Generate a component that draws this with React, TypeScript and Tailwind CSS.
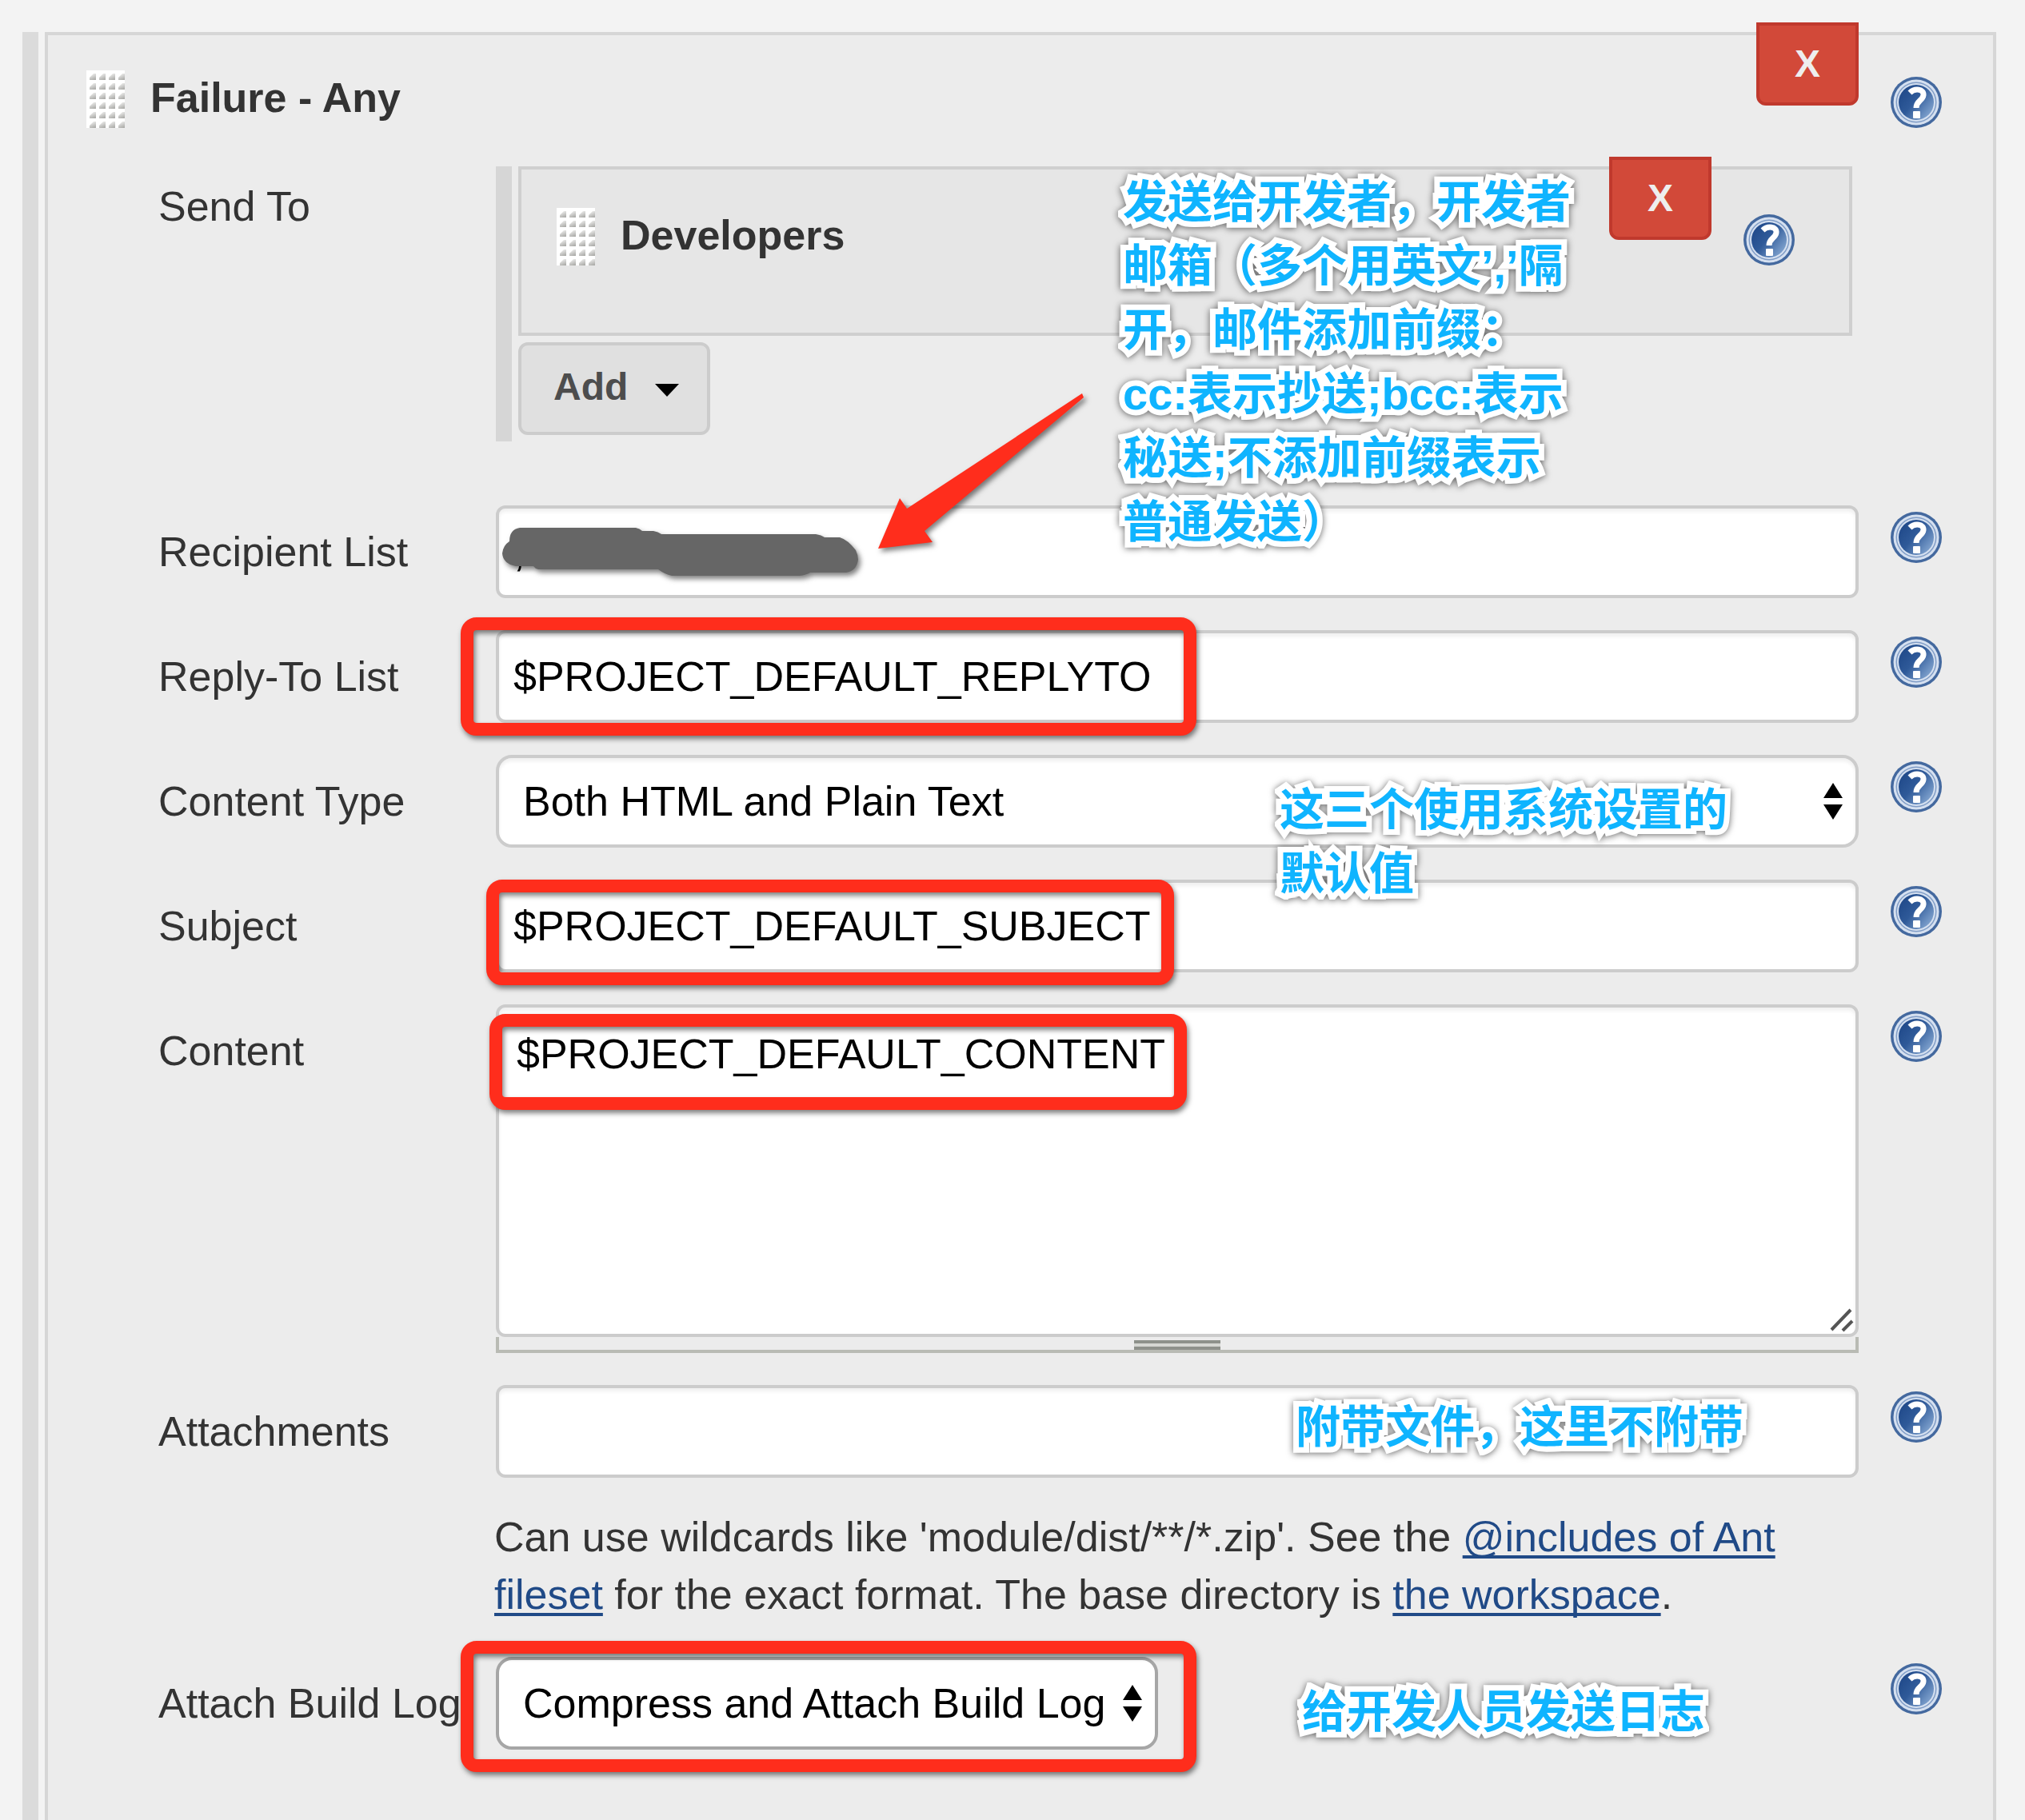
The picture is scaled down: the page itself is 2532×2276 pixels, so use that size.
import type { ReactNode } from "react";

function HelpIcon({ label }: { label: string }) {
  return (
    <button type="button" aria-label={label} className="block size-16 shrink-0 cursor-pointer">
      <svg viewBox="0 0 64 64" className="size-16" aria-hidden="true">
        <defs>
          <linearGradient id="helpFill" x1="0" y1="0.1" x2="1" y2="0.9">
            <stop offset="0" stopColor="#1d4687" />
            <stop offset="0.45" stopColor="#2f5a99" />
            <stop offset="1" stopColor="#8fb0d8" />
          </linearGradient>
        </defs>
        <circle cx="32" cy="32" r="32" fill="#44699f" />
        <circle cx="32" cy="32" r="28.5" fill="#d5e0f0" />
        <circle cx="32" cy="32" r="25.5" fill="#7f9cc6" />
        <circle cx="32" cy="32" r="24" fill="#d5e0f0" />
        <circle cx="32" cy="32" r="22" fill="url(#helpFill)" />
        <path d="M24 20 C30 14 42 15 41 23 C40 30 32 30 32 39" fill="none" stroke="#fff" strokeWidth="7" />
        <rect x="28" y="43" width="9" height="9" rx="1" fill="#fff" />
      </svg>
    </button>
  );
}

function Grip() {
  return (
    <svg viewBox="0 0 48 72" className="h-18 w-12 shrink-0 cursor-move" aria-hidden="true">
      <defs>
        <linearGradient id="dotFill" x1="0.2" y1="0" x2="0.6" y2="1">
          <stop offset="0" stopColor="#f4f4f3" />
          <stop offset="1" stopColor="#adadaa" />
        </linearGradient>
        <pattern id="gripDots" width="12" height="12" patternUnits="userSpaceOnUse">
          <rect width="12" height="12" fill="#fff" />
          <path d="M4 12 L4 9 L9 4 L12 4 L12 12 Z" fill="url(#dotFill)" />
        </pattern>
      </defs>
      <rect width="48" height="72" fill="url(#gripDots)" />
    </svg>
  );
}

function DeleteButton({ label }: { label: string }) {
  return (
    <button
      type="button"
      aria-label={label}
      className="-mt-4 flex h-26 w-32 shrink-0 cursor-pointer items-center justify-center rounded-b-xl border-4 border-[#c0392d] bg-[#d24939] text-[48px] leading-none font-bold text-[#eeeeee]"
    >
      X
    </button>
  );
}

function Note({ className, children }: { className: string; children: ReactNode }) {
  return (
    <p
      className={
        "pointer-events-none absolute z-20 text-[56px] leading-[80px] font-bold whitespace-nowrap text-[#0fb4ff] [-webkit-text-stroke:14px_#fff] [paint-order:stroke_fill] [stroke-linejoin:round] [filter:drop-shadow(0_1px_4px_rgb(0_0_0/0.6))] " +
        className
      }
    >
      {children}
    </p>
  );
}

function Mark({ className }: { className: string }) {
  return (
    <div
      aria-hidden="true"
      className={
        "pointer-events-none absolute z-10 rounded-[20px] border-16 border-[#ff2d1c] [filter:drop-shadow(2px_4px_3px_rgb(0_0_0/0.5))] " +
        className
      }
    />
  );
}

function UpDown() {
  return (
    <svg
      viewBox="0 0 24 46"
      className="pointer-events-none absolute top-[35px] right-5 h-[46px] w-6"
      aria-hidden="true"
    >
      <path d="M12 0 L24 19 H0 Z M0 27 H24 L12 46 Z" fill="#000" />
    </svg>
  );
}

function Row({ label, htmlFor, children }: { label: string; htmlFor: string; children: ReactNode }) {
  return (
    <div className="flex items-start">
      <label htmlFor={htmlFor} className="w-[422px] shrink-0 pt-7 leading-[60px] whitespace-nowrap">
        {label}
      </label>
      <div className="relative min-w-0 flex-1">{children}</div>
      <div className="ml-10 w-16 shrink-0 pt-2">
        <HelpIcon label={"Help for " + label} />
      </div>
    </div>
  );
}

const textBox =
  "block h-29 w-full rounded-xl border-4 border-[#cccccc] bg-white px-[18px] text-[52px] text-black shadow-[inset_0_4px_4px_#f0f0f0] outline-none";

const link = "text-[#204a87] underline decoration-4 underline-offset-[5px] [text-decoration-skip-ink:none]";

export default function App() {
  return (
    <main className="flex min-h-screen gap-2 bg-[#f3f3f3] pt-10 pr-9 pl-7 font-['Liberation_Sans','Noto_Sans_CJK_SC',sans-serif] text-[52px] text-[#333333]">
      <div className="w-5 shrink-0 bg-[#dbdbdb]" />
      <form className="min-w-0 flex-1 border-4 border-b-0 border-[#d6d6d6] bg-[#ececec] pr-16 pb-22 pl-12">
        <header className="-mt-1 flex items-start">
          <div className="flex flex-1 items-start gap-8 pt-12">
            <Grip />
            <h2 className="pt-1 leading-[60px] font-bold">Failure - Any</h2>
          </div>
          <div className="flex items-start gap-10">
            <div className="pt-1">
              <DeleteButton label="Delete trigger" />
            </div>
            <div className="pt-14">
              <HelpIcon label="Help for Failure - Any" />
            </div>
          </div>
        </header>

        <div className="mt-12 flex flex-col gap-10 pl-[90px]">
          <section className="relative flex items-start pb-10">
            <h3 className="w-[422px] shrink-0 pt-5 leading-[60px]">Send To</h3>
            <div className="mr-28 flex min-w-0 flex-1 gap-2">
              <div className="w-5 shrink-0 bg-[#d6d6d6]" />
              <div className="min-w-0 flex-1 pb-2">
                <div className="flex h-53 items-start border-4 border-[#cfcfcf] bg-[#e6e6e6] pr-17 pl-11">
                  <div className="flex flex-1 items-start gap-8 pt-12">
                    <Grip />
                    <h4 className="pt-1 leading-[60px] font-bold">Developers</h4>
                  </div>
                  <div className="flex items-start gap-10">
                    <DeleteButton label="Delete Developers" />
                    <div className="pt-14">
                      <HelpIcon label="Help for Developers" />
                    </div>
                  </div>
                </div>
                <button
                  type="button"
                  className="mt-2 flex h-29 w-60 cursor-pointer items-center rounded-xl border-4 border-[#cccccc] bg-[#e0e0e0] pb-1 pl-10 text-[48px] leading-none font-bold text-[#4d4d4d]"
                >
                  Add
                  <svg viewBox="0 0 30 16" className="mt-2 ml-[34px] h-4 w-[30px]" aria-hidden="true">
                    <path d="M0 0 H30 L15 16 Z" fill="#000" />
                  </svg>
                </button>
              </div>
            </div>
            <Note className="top-[5px] left-[1206px]">
              发送给开发者，开发者<br />
              邮箱（多个用英文’,’隔<br />
              开，邮件添加前缀：<br />
              cc:表示抄送;bcc:表示<br />
              秘送;不添加前缀表示<br />
              普通发送）
            </Note>
          </section>

          <Row label="Recipient List" htmlFor="recipients">
            <input id="recipients" type="text" defaultValue="," className={textBox} />
            <svg
              viewBox="0 0 750 290"
              className="pointer-events-none absolute -top-[150px] left-0 z-10 h-[290px] w-[750px] [filter:drop-shadow(3px_4px_3px_rgb(0_0_0/0.5))]"
              aria-hidden="true"
            >
              <path d="M733 10 L735 15 L536 182 L546 196 L478 204 L505 141 L514 154 Z" fill="#ff2d1c" />
              <path
                d="M17 195 Q17 180 30 178 H175 Q180 179 183 182 H197 Q203 183 207 186 H400 Q407 187 411 190 H430 Q440 193 450 206 Q453 212 453 218 Q451 232 438 234 H393 Q388 237 380 238 H220 Q211 236 203 230 H53 Q49 229 47 226 H25 Q9 223 8 210 Q9 200 17 195 Z"
                fill="#666666"
              />
            </svg>
          </Row>

          <Row label="Reply-To List" htmlFor="replyTo">
            <input id="replyTo" type="text" defaultValue="$PROJECT_DEFAULT_REPLYTO" className={textBox} />
            <Mark className="-top-4 -left-11 h-37 w-[920px]" />
          </Row>

          <Row label="Content Type" htmlFor="contentType">
            <select
              id="contentType"
              className="block h-29 w-full appearance-none rounded-[20px] border-4 border-[#cccccc] bg-white pl-[30px] text-[52px] text-black shadow-[inset_0_4px_4px_#f0f0f0] outline-none"
            >
              <option>Both HTML and Plain Text</option>
            </select>
            <UpDown />
            <Note className="top-[29px] left-[980px]">
              这三个使用系统设置的<br />
              默认值
            </Note>
          </Row>

          <Row label="Subject" htmlFor="subject">
            <input id="subject" type="text" defaultValue="$PROJECT_DEFAULT_SUBJECT" className={textBox} />
            <Mark className="top-0 -left-3 h-33 w-[860px]" />
          </Row>

          <Row label="Content" htmlFor="content">
            <textarea
              id="content"
              defaultValue="$PROJECT_DEFAULT_CONTENT"
              className="block h-104 w-full resize-none rounded-xl border-4 border-[#cccccc] bg-white px-[22px] pt-7 text-[52px] leading-[60px] text-black shadow-[inset_0_4px_4px_#f0f0f0] outline-none"
            />
            <svg viewBox="0 0 30 30" className="pointer-events-none absolute right-[6px] bottom-[26px] size-[30px]" aria-hidden="true">
              <path d="M2 27 L26 2 M16 28 L28 16" stroke="#555" strokeWidth="4" fill="none" />
            </svg>
            <div className="flex h-5 justify-center border-4 border-t-0 border-[#b9bbb4] pt-1">
              <div className="h-3 w-27 border-y-4 border-[#8e918b] bg-[#d5d7d2]" />
            </div>
            <Mark className="top-3 -left-2 h-30 w-[872px]" />
          </Row>

          <div className="flex flex-col">
            <Row label="Attachments" htmlFor="attachments">
              <input id="attachments" type="text" className={textBox} />
              <Note className="top-[13px] left-[1000px]">附带文件，这里不附带</Note>
            </Row>
            <p className="mt-[38px] mr-26 mb-[2px] ml-[420px] leading-[72px]">
              Can use wildcards like 'module/dist/**/*.zip'. See the{" "}
              <a href="#includes" className={link}>
                @includes of Ant fileset
              </a>{" "}
              for the exact format. The base directory is{" "}
              <a href="#workspace" className={link}>
                the workspace
              </a>
              .
            </p>
          </div>

          <Row label="Attach Build Log" htmlFor="buildLog">
            <div className="relative w-[828px]">
              <select
                id="buildLog"
                className="block h-29 w-full appearance-none rounded-[20px] border-4 border-[#a6a6a6] bg-white pl-[30px] text-[52px] text-black outline-none"
              >
                <option>Compress and Attach Build Log</option>
              </select>
              <UpDown />
            </div>
            <Mark className="-top-5 -left-11 h-41 w-[920px]" />
            <Note className="top-[29px] left-[1008px]">给开发人员发送日志</Note>
          </Row>
        </div>
      </form>
    </main>
  );
}
